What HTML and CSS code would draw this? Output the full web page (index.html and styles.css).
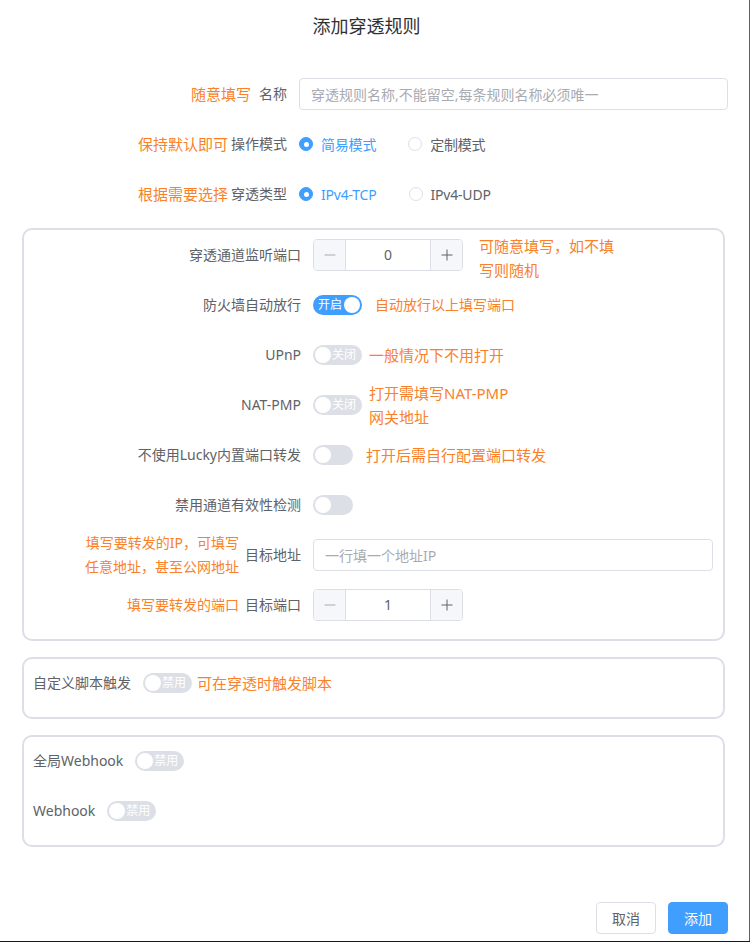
FILE: index.html
```html
<!DOCTYPE html>
<html lang="zh-CN">
<head>
  <meta charset="UTF-8" />
  <title>添加穿透规则</title>
  <link rel="stylesheet" href="styles.css">
</head>
<body>
  <div class="dialog">
    <div class="dialog-header">添加穿透规则</div>

    <div class="dialog-body">
      <!-- 基本设置 -->
      <div class="form-item">
        <div class="label"><span class="hint big gap-8">随意填写</span>名称</div>
        <div class="content">
          <input class="input" placeholder="穿透规则名称,不能留空,每条规则名称必须唯一" />
        </div>
      </div>

      <div class="form-item">
        <div class="label"><span class="hint big">保持默认即可</span>操作模式</div>
        <div class="content">
          <span class="radio checked"><span class="radio-dot"></span><span class="radio-label">简易模式</span></span>
          <span class="radio"><span class="radio-dot"></span><span class="radio-label">定制模式</span></span>
        </div>
      </div>

      <div class="form-item">
        <div class="label"><span class="hint big">根据需要选择</span>穿透类型</div>
        <div class="content">
          <span class="radio checked"><span class="radio-dot"></span><span class="radio-label">IPv4-TCP</span></span>
          <span class="radio"><span class="radio-dot"></span><span class="radio-label">IPv4-UDP</span></span>
        </div>
      </div>

      <!-- 端口设置 -->
      <div class="box">
        <div class="form-item">
          <div class="label">穿透通道监听端口</div>
          <div class="content">
            <div class="number">
              <span class="num-btn dec disabled">
                <svg width="12" height="12" viewBox="0 0 12 12"><path d="M0.5 6h11" stroke="currentColor" stroke-width="1"/></svg>
              </span>
              <span class="num-value">0</span>
              <span class="num-btn inc">
                <svg width="12" height="12" viewBox="0 0 12 12"><path d="M0.5 6h11M6 0.5v11" stroke="currentColor" stroke-width="1"/></svg>
              </span>
            </div>
            <span class="note far">可随意填写，如不填<br>写则随机</span>
          </div>
        </div>

        <div class="form-item">
          <div class="label">防火墙自动放行</div>
          <div class="content">
            <span class="switch on"><span class="switch-text">开启</span><span class="knob"></span></span>
            <span class="note small">自动放行以上填写端口</span>
          </div>
        </div>

        <div class="form-item">
          <div class="label">UPnP</div>
          <div class="content">
            <span class="switch"><span class="knob"></span><span class="switch-text">关闭</span></span>
            <span class="note near">一般情况下不用打开</span>
          </div>
        </div>

        <div class="form-item">
          <div class="label">NAT-PMP</div>
          <div class="content">
            <span class="switch"><span class="knob"></span><span class="switch-text">关闭</span></span>
            <span class="note near">打开需填写NAT-PMP<br>网关地址</span>
          </div>
        </div>

        <div class="form-item">
          <div class="label">不使用Lucky内置端口转发</div>
          <div class="content">
            <span class="switch plain"><span class="knob"></span></span>
            <span class="note">打开后需自行配置端口转发</span>
          </div>
        </div>

        <div class="form-item">
          <div class="label">禁用通道有效性检测</div>
          <div class="content">
            <span class="switch plain"><span class="knob"></span></span>
          </div>
        </div>

        <div class="form-item">
          <div class="label"><span class="hint gap-6">填写要转发的IP，可填写<br>任意地址，甚至公网地址</span>目标地址</div>
          <div class="content">
            <input class="input" placeholder="一行填一个地址IP" />
          </div>
        </div>

        <div class="form-item">
          <div class="label"><span class="hint gap-6">填写要转发的端口</span>目标端口</div>
          <div class="content">
            <div class="number">
              <span class="num-btn dec disabled">
                <svg width="12" height="12" viewBox="0 0 12 12"><path d="M0.5 6h11" stroke="currentColor" stroke-width="1"/></svg>
              </span>
              <span class="num-value">1</span>
              <span class="num-btn inc">
                <svg width="12" height="12" viewBox="0 0 12 12"><path d="M0.5 6h11M6 0.5v11" stroke="currentColor" stroke-width="1"/></svg>
              </span>
            </div>
          </div>
        </div>
      </div>

      <!-- 脚本 -->
      <div class="box inline">
        <div class="form-item">
          <div class="label">自定义脚本触发</div>
          <div class="content">
            <span class="switch"><span class="knob"></span><span class="switch-text">禁用</span></span>
            <span class="note tight">可在穿透时触发脚本</span>
          </div>
        </div>
      </div>

      <!-- Webhook -->
      <div class="box inline">
        <div class="form-item">
          <div class="label">全局Webhook</div>
          <div class="content">
            <span class="switch"><span class="knob"></span><span class="switch-text">禁用</span></span>
          </div>
        </div>
        <div class="form-item">
          <div class="label">Webhook</div>
          <div class="content">
            <span class="switch"><span class="knob"></span><span class="switch-text">禁用</span></span>
          </div>
        </div>
      </div>
    </div>

    <div class="dialog-footer">
      <button class="btn">取消</button>
      <button class="btn primary">添加</button>
    </div>
  </div>
</body>
</html>
```

FILE: styles.css
```css
/* Osnova */
body {
  margin: 0;
  background-color: #0f1728;
  font-family: "Noto Sans", "Noto Sans CJK SC", sans-serif;
  font-size: 14px;
  color: #606266;
}

.dialog {
  width: 749px;
  height: 941px;
  background-color: #fff;
  box-shadow: 1px 0 0 #5f5f5f;
  display: flex;
  flex-direction: column;
}

.dialog-header {
  height: 50px;
  margin-right: 16px;
  display: flex;
  align-items: center;
  justify-content: center;
  font-size: 18px;
  color: #303133;
}

.dialog-body {
  flex: 1;
  padding: 28px 21px 0 22px;
}

/* Vrstice obrazca */
.form-item {
  display: flex;
  align-items: center;
  height: 32px;
  margin-bottom: 18px;
}

.label {
  width: 277px;
  flex-shrink: 0;
  height: 32px;
  padding-right: 12px;
  box-sizing: border-box;
  display: flex;
  align-items: center;
  justify-content: flex-end;
  white-space: nowrap;
  line-height: 24px;
}

.content {
  flex: 1;
  min-width: 0;
  display: flex;
  align-items: center;
  height: 32px;
}

.hint {
  color: #f9812a;
  text-align: right;
  margin-right: 3px;
}

.hint.big {
  font-size: 15px;
}

.gap-8 {
  margin-right: 8px;
}

.gap-6 {
  margin-right: 6px;
}

.note {
  color: #f9812a;
  font-size: 15px;
  line-height: 24px;
  white-space: nowrap;
  margin-left: 13px;
}

.note.small {
  font-size: 14px;
}

.note.near {
  margin-left: 7px;
}

.note.tight {
  margin-left: 5px;
}

.note.far {
  margin-left: 16px;
  margin-top: 5px;
}

/* Okvirji */
.box {
  border: 2px solid #dcdfe6;
  border-radius: 10px;
  padding: 9px 10px 0 0;
  margin-right: 3px;
  margin-bottom: 16px;
}

.box .label {
  width: 289px;
}

.box.inline {
  padding-top: 8px;
  padding-left: 9px;
}

.box.inline .label {
  width: auto;
}

/* Vnosna polja */
.input {
  flex: 1;
  height: 32px;
  box-sizing: border-box;
  border: 1px solid #dcdfe6;
  border-radius: 4px;
  padding: 0 11px;
  font: inherit;
  color: #606266;
  outline: none;
}

.input::placeholder {
  color: #a8abb2;
}

.number {
  width: 150px;
  height: 32px;
  flex-shrink: 0;
  box-sizing: border-box;
  border: 1px solid #dcdfe6;
  border-radius: 4px;
  display: flex;
  overflow: hidden;
}

.num-btn {
  width: 31px;
  background-color: #f5f7fa;
  color: #606266;
  display: flex;
  align-items: center;
  justify-content: center;
}

.num-btn.disabled {
  color: #a8abb2;
}

.dec {
  border-right: 1px solid #dcdfe6;
}

.inc {
  border-left: 1px solid #dcdfe6;
}

.num-value {
  flex: 1;
  text-align: center;
  line-height: 30px;
  color: #606266;
}

/* Radio */
.radio {
  display: inline-flex;
  align-items: center;
  margin-right: 32px;
}

.radio-dot {
  width: 14px;
  height: 14px;
  box-sizing: border-box;
  border: 1px solid #dcdfe6;
  border-radius: 50%;
  display: flex;
  align-items: center;
  justify-content: center;
}

.radio.checked .radio-dot {
  background-color: #409eff;
  border-color: #409eff;
}

.radio.checked .radio-dot::after {
  content: "";
  width: 5px;
  height: 5px;
  border-radius: 50%;
  background-color: #fff;
}

.radio-label {
  padding-left: 8px;
  letter-spacing: -0.2px;
}

.radio.checked .radio-label {
  color: #409eff;
}

/* Stikala */
.switch {
  width: 49px;
  height: 20px;
  flex-shrink: 0;
  box-sizing: border-box;
  padding: 0 2px;
  border-radius: 10px;
  background-color: #dcdfe6;
  display: inline-flex;
  align-items: center;
}

.switch.plain {
  width: 40px;
}

.switch.on {
  background-color: #409eff;
}

.knob {
  width: 16px;
  height: 16px;
  border-radius: 50%;
  background-color: #fff;
  flex-shrink: 0;
}

.switch-text {
  font-size: 12px;
  line-height: 20px;
  color: #fff;
  margin-left: 1px;
}

.switch.on .switch-text {
  margin-left: 3px;
  margin-right: auto;
}

/* Gumbi */
.dialog-footer {
  display: flex;
  justify-content: flex-end;
  gap: 12px;
  padding: 0 21px 7px;
}

.btn {
  width: 60px;
  height: 32px;
  border: 1px solid #dcdfe6;
  border-radius: 4px;
  background-color: #fff;
  font-family: inherit;
  font-size: 14px;
  color: #606266;
  cursor: pointer;
}

.btn.primary {
  background-color: #409eff;
  border-color: #409eff;
  color: #fff;
}
```
